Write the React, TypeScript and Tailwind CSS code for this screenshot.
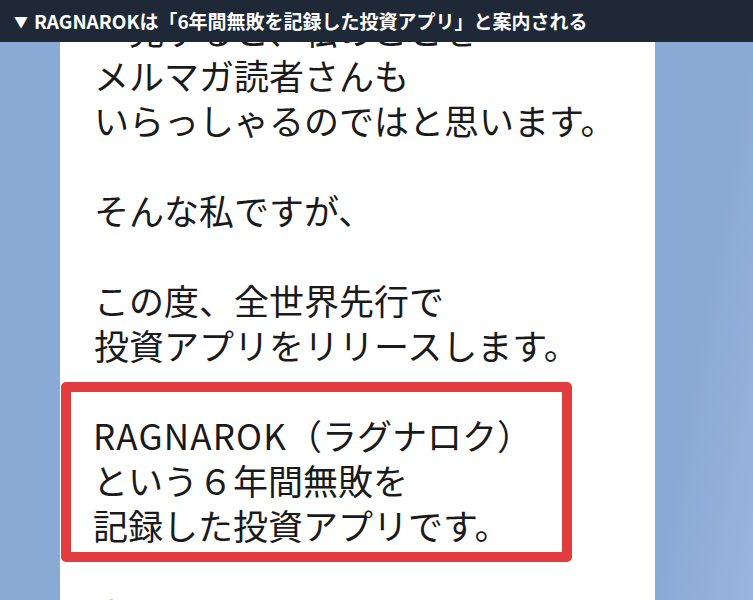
import React from "react";

const jp = { fontFamily: '"Noto Sans CJK JP", "Noto Sans", sans-serif' };

export default function App() {
  return (
    <div className="w-[753px] h-[600px] overflow-hidden flex flex-col bg-[#8aaad6]" style={jp}>
      <div className="h-[42px] shrink-0 bg-[#1e2836] flex items-center pl-[14px] text-white text-[19px] font-bold tracking-[0px] z-10">
        <span className="text-[14px] mr-[6px]">▼</span>
        <span>RAGNAROKは「6年間無敗を記録した投資アプリ」と案内される</span>
      </div>
      <div className="flex flex-1 min-h-0">
        <div className="w-[60px] shrink-0 bg-[#8aaad6]" />
        <div className="w-[595px] shrink-0 bg-white overflow-hidden">
          <div className="mt-[-35px] pl-[34px] text-[35px] leading-[45px] text-[#1a1a1a] font-normal">
            <p>一見すると、私のことを</p>
            <p>メルマガ読者さんも</p>
            <p>いらっしゃるのではと思います。</p>
            <p>&nbsp;</p>
            <p>そんな私ですが、</p>
            <p>&nbsp;</p>
            <p>この度、全世界先行で</p>
            <p>投資アプリをリリースします。</p>
            <div className="mt-[15px] ml-[-33px] w-[511px] border-[10px] border-[#e13c3e] rounded-[5px] pl-[22px] pt-[20px] pb-[5px]">
              <p>
                <span className="tracking-[1.2px]">RAGNAROK</span>（ラグナロク）
              </p>
              <p>という６年間無敗を</p>
              <p>記録した投資アプリです。</p>
            </div>
            <p className="mt-[30px]">今回は特別にご案内します。</p>
          </div>
        </div>
        <div className="flex-1 bg-gradient-to-br from-[#8aaad6] via-[#8aaad6] to-[#9ab4de]" />
      </div>
    </div>
  );
}
